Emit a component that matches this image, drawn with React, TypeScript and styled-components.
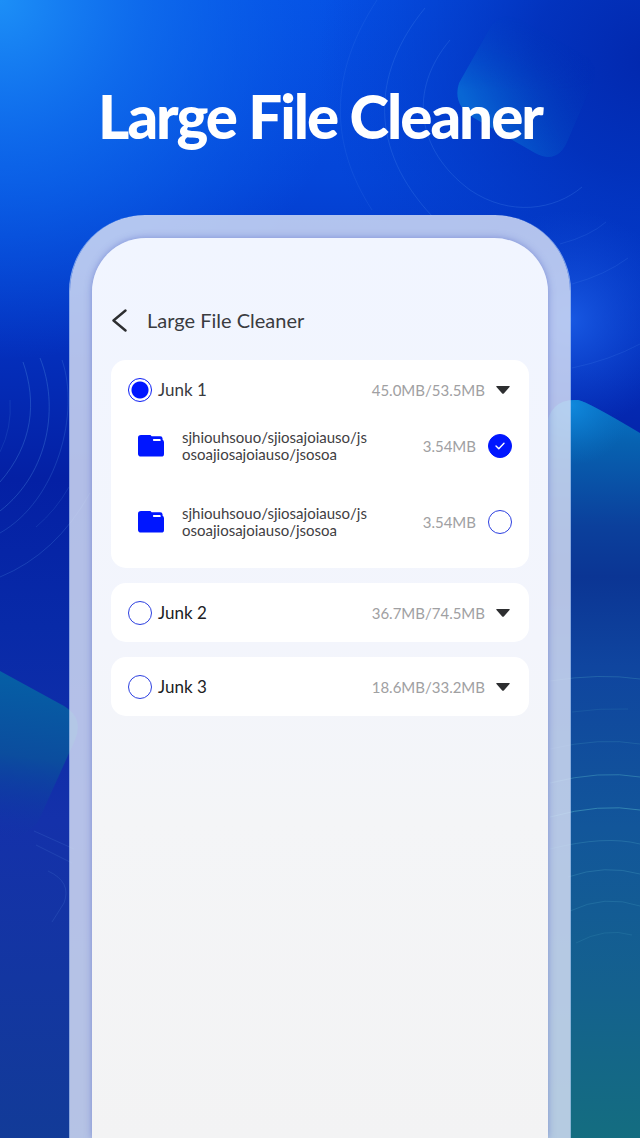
import React, { useState } from "react";
import styled, { createGlobalStyle } from "styled-components";

const GlobalStyle = createGlobalStyle`
  *, *::before, *::after { box-sizing: border-box; }
  body { margin: 0; background: #0428b4; font-family: Lato, "Liberation Sans", sans-serif; }
`;

const Page = styled.div`
  position: relative;
  display: flex;
  flex-direction: column;
  min-height: 100vh;
  overflow: hidden;
`;

const Backdrop = styled.svg`
  position: absolute;
  inset: 0;
  width: 100%;
  height: 100%;
`;

const Headline = styled.h1`
  position: relative;
  margin: 0;
  padding: 80px 24px 63px;
  color: #fff;
  font-size: 60px;
  font-weight: 900;
  line-height: 72px;
  letter-spacing: -2px;
  text-align: center;
`;

const Phone = styled.div`
  position: relative;
  flex: 1;
  display: flex;
  margin: 0 69px;
  padding: 23px 22px 0;
  border: 1px solid rgba(190, 212, 248, 0.7);
  border-width: 0 1px;
  border-radius: 76px 76px 0 0;
  background: rgba(214, 222, 244, 0.83);
  background-clip: padding-box;
`;

const Screen = styled.main`
  flex: 1;
  min-width: 0;
  padding: 60px 19px 40px;
  border-radius: 54px 54px 0 0;
  background: linear-gradient(#f1f5ff, #f3f5fc 45%, #f4f5f7 65%, #f3f3f4);
  box-shadow: 0 0 7px rgba(72, 88, 190, 0.5);
`;

const AppBar = styled.header`
  display: flex;
  align-items: center;
  gap: 19px;
  height: 44px;
`;

const IconButton = styled.button<{ $width: number }>`
  display: flex;
  align-items: center;
  justify-content: center;
  width: ${(p) => p.$width}px;
  height: 24px;
  padding: 0;
  border: 0;
  background: none;
  color: #2d2e30;
  cursor: pointer;
`;

const BarTitle = styled.h2`
  margin: 0;
  color: #3a3b3f;
  font-size: 20px;
  font-weight: 400;
  line-height: 24px;
`;

const Groups = styled.div`
  display: flex;
  flex-direction: column;
  gap: 15px;
  margin-top: 18px;
`;

const Card = styled.section`
  border-radius: 15px;
  background: #fff;
`;

const CardHeader = styled.div`
  display: flex;
  align-items: center;
  gap: 9px;
  height: 59px;
  padding: 0 17px;
`;

const GroupLabel = styled.label<{ $muted: boolean }>`
  display: flex;
  flex: 1;
  align-items: center;
  gap: 6px;
  color: ${(p) => (p.$muted ? "#3a3b3f" : "#202124")};
  font-size: 17px;
  line-height: 24px;
  cursor: pointer;
`;

const Radio = styled.input`
  appearance: none;
  width: 24px;
  height: 24px;
  margin: 0;
  border: 1px solid #2c3fe0;
  border-radius: 50%;
  background: #fff;
  cursor: pointer;

  &:checked {
    border-color: #0a1cf5;
    background: radial-gradient(circle, #0016ff 8px, #fff 9px);
  }
`;

const Size = styled.span`
  color: #a0a0a2;
  font-size: 15px;
  line-height: 18px;
  white-space: nowrap;
`;

const FileList = styled.ul`
  display: flex;
  flex-direction: column;
  gap: 22px;
  margin: 0;
  padding: 0 17px 19px 27px;
  list-style: none;
`;

const FileRow = styled.li`
  display: flex;
  align-items: center;
  gap: 12px;
  height: 54px;
`;

const FileLabel = styled.label`
  display: flex;
  flex: 1;
  align-items: center;
  gap: 18px;
  cursor: pointer;
`;

const FilePath = styled.span`
  width: 188px;
  color: #3f4043;
  font-size: 15px;
  line-height: 17px;
  word-break: break-all;
`;

const CheckWrap = styled.span`
  display: grid;
  width: 24px;
  height: 24px;

  & > * { grid-area: 1 / 1; }
  & > svg { place-self: center; pointer-events: none; }
`;

const Checkbox = styled.input`
  appearance: none;
  width: 24px;
  height: 24px;
  margin: 0;
  border: 1px solid #2c3fe0;
  border-radius: 50%;
  background: #fff;
  cursor: pointer;

  &:checked { border-color: #0016ff; background: #0016ff; }
`;

const FolderIcon = () => (
  <svg width="26" height="22" viewBox="0 0 26 22" aria-hidden="true">
    <path
      fill="#0016ff"
      d="M3 0H11.5C12.6 0 13 .4 13.6 1.2H22.2A2.4 2.4 0 0 1 24.6 3.5V4.8Q26 5.4 26 7.2V19Q26 21.6 23.4 21.6H3Q0 21.6 0 18.8V2.8Q0 0 3 0ZM15.8 3.9A1 1 0 0 0 16 5.9H22.6V4.4Q22.6 3.9 22 3.9Z"
    />
  </svg>
);

const Scene = () => (
  <Backdrop viewBox="0 0 640 1138" preserveAspectRatio="xMidYMid slice" aria-hidden="true">
    <defs>
      <linearGradient id="base" x1="0" y1="0" x2="0" y2="1">
        <stop offset="0" stopColor="#0550e4" />
        <stop offset="0.16" stopColor="#0445d8" />
        <stop offset="0.3" stopColor="#0430bd" />
        <stop offset="0.42" stopColor="#0420a4" />
        <stop offset="0.55" stopColor="#082aa8" />
        <stop offset="0.72" stopColor="#1431aa" />
        <stop offset="1" stopColor="#123b98" />
      </linearGradient>
      <radialGradient id="sky" gradientUnits="userSpaceOnUse" cx="0" cy="0" r="360">
        <stop offset="0" stopColor="#1c8ff7" />
        <stop offset="0.4" stopColor="#1070ee" stopOpacity="0.8" />
        <stop offset="1" stopColor="#0860ec" stopOpacity="0" />
      </radialGradient>
      <radialGradient id="navy" gradientUnits="userSpaceOnUse" cx="650" cy="60" r="330">
        <stop offset="0" stopColor="#0228ae" />
        <stop offset="0.35" stopColor="#022eb7" stopOpacity="0.85" />
        <stop offset="1" stopColor="#0338c6" stopOpacity="0" />
      </radialGradient>
      <radialGradient id="glow" gradientUnits="userSpaceOnUse" cx="570" cy="320" r="110">
        <stop offset="0" stopColor="#1858e2" />
        <stop offset="1" stopColor="#0d48d2" stopOpacity="0" />
      </radialGradient>
      <linearGradient id="gem" gradientUnits="userSpaceOnUse" x1="480" y1="130" x2="600" y2="70">
        <stop offset="0" stopColor="#0866d4" />
        <stop offset="1" stopColor="#0230b4" stopOpacity="0" />
      </linearGradient>
      <linearGradient id="gemFade" gradientUnits="userSpaceOnUse" x1="0" y1="10" x2="0" y2="90">
        <stop offset="0" stopColor="#000" />
        <stop offset="1" stopColor="#fff" />
      </linearGradient>
      <mask id="gemMask" maskUnits="userSpaceOnUse" x="440" y="0" width="200" height="180">
        <rect x="440" width="200" height="180" fill="url(#gemFade)" />
      </mask>
      <linearGradient id="leftGem" gradientUnits="userSpaceOnUse" x1="30" y1="672" x2="10" y2="840">
        <stop offset="0" stopColor="#0560a6" />
        <stop offset="0.5" stopColor="#0b4d9e" />
        <stop offset="1" stopColor="#1034a4" stopOpacity="0" />
      </linearGradient>
      <linearGradient id="rightPanel" gradientUnits="userSpaceOnUse" x1="0" y1="400" x2="0" y2="1138">
        <stop offset="0" stopColor="#0875c8" />
        <stop offset="0.06" stopColor="#0761b0" />
        <stop offset="0.17" stopColor="#0b409c" />
        <stop offset="0.24" stopColor="#0b3594" />
        <stop offset="0.36" stopColor="#0f459f" />
        <stop offset="0.58" stopColor="#12569a" />
        <stop offset="0.8" stopColor="#14618e" />
        <stop offset="1" stopColor="#146d80" />
      </linearGradient>
      <radialGradient id="panelGlow" gradientUnits="userSpaceOnUse" cx="572" cy="405" r="60">
        <stop offset="0" stopColor="#1088dc" />
        <stop offset="1" stopColor="#0a70c4" stopOpacity="0" />
      </radialGradient>
    </defs>
    <rect width="640" height="1138" fill="url(#base)" />
    <rect width="640" height="400" fill="url(#sky)" />
    <rect x="300" width="340" height="420" fill="url(#navy)" />
    <rect x="440" y="190" width="200" height="250" fill="url(#glow)" />
    <path
      d="M459 83L490 28Q500 10 520 20L585 56Q600 66 592 84L568 140Q558 165 535 153L474 118Q452 105 459 83Z"
      fill="url(#gem)"
      mask="url(#gemMask)"
    />
    <g fill="none" stroke="#4f8df0" strokeOpacity="0.24">
      <path d="M450 40C408 90 416 150 470 190C510 217 555 210 582 187" />
      <path d="M425 8C370 75 370 150 432 216" />
      <path d="M377 0C328 75 330 145 372 210" strokeOpacity="0.15" />
      <path d="M560 244Q590 236 606 222M572 284Q605 275 628 258M572 368Q610 360 640 344" strokeOpacity="0.18" />
    </g>
    <g fill="none" stroke="#4f8ddf" strokeOpacity="0.34">
      <path d="M10 400Q12 428 0 452" strokeOpacity="0.18" />
      <path d="M23 362C37 402 33 444 0 482" />
      <path d="M40 358C59 405 50 472 0 511" />
      <path d="M62 360C80 412 58 500 0 533" strokeOpacity="0.26" />
      <path d="M69 487Q56 510 36 527" strokeOpacity="0.18" />
      <path d="M90 493Q56 554 0 577" strokeOpacity="0.26" />
    </g>
    <path d="M0 671L64 706Q84 718 75 740L38 822Q20 842 0 842Z" fill="url(#leftGem)" />
    <g fill="none" stroke="#4f7fd8" strokeOpacity="0.22">
      <path d="M34 831L74 849M36 845L72 863M48 871Q72 882 64 903L52 922" />
    </g>
    <path
      d="M546 1138V428Q550 398 578 400Q588 402 640 433V1138Z"
      fill="url(#rightPanel)"
    />
    <path d="M546 500V428Q550 398 578 400Q588 402 640 433V500Z" fill="url(#panelGlow)" />
    <g fill="none" stroke="#46a0c0" strokeOpacity="0.32">
      <path d="M550 681Q600 673 640 679" />
      <path d="M572 712Q600 708 628 709" strokeOpacity="0.16" />
      <path d="M550 749Q600 737 640 744" strokeOpacity="0.24" />
      <path d="M550 783Q600 770 640 777" strokeOpacity="0.5" />
      <path d="M550 817Q600 803 640 810" strokeOpacity="0.62" />
      <path d="M550 849Q605 835 640 844" />
      <path d="M568 877Q605 864 640 874" />
      <path d="M570 911Q605 894 640 906" strokeOpacity="0.26" />
      <path d="M576 943Q605 927 632 935" strokeOpacity="0.2" />
    </g>
  </Backdrop>
);

const PATH = "sjhiouhsouo/sjiosajoiauso/jsosoajiosajoiauso/jsosoa";

const GROUPS = [
  {
    name: "Junk 1",
    size: "45.0MB/53.5MB",
    files: [
      { id: "file-1", path: PATH, size: "3.54MB", checked: true },
      { id: "file-2", path: PATH, size: "3.54MB", checked: false },
    ],
  },
  { name: "Junk 2", size: "36.7MB/74.5MB", files: [] },
  { name: "Junk 3", size: "18.6MB/33.2MB", files: [] },
];

export default function App() {
  const [selected, setSelected] = useState("Junk 1");

  return (
    <>
      <GlobalStyle />
      <Page>
        <Scene />
        <Headline>Large File Cleaner</Headline>
        <Phone>
          <Screen>
            <AppBar>
              <IconButton $width={17} type="button" aria-label="Back">
                <svg width="17" height="24" viewBox="0 0 17 24" fill="none" aria-hidden="true">
                  <path d="M14.5 2.5L2.5 12.5L14.5 22.5" stroke="currentColor" strokeWidth="2.4" strokeLinecap="round" strokeLinejoin="round" />
                </svg>
              </IconButton>
              <BarTitle>Large File Cleaner</BarTitle>
            </AppBar>
            <Groups>
              {GROUPS.map((group) => (
                <Card key={group.name}>
                  <CardHeader>
                    <GroupLabel $muted={group.files.length > 0}>
                      <Radio
                        type="radio"
                        name="group"
                        checked={selected === group.name}
                        onChange={() => setSelected(group.name)}
                      />
                      {group.name}
                    </GroupLabel>
                    <Size>{group.size}</Size>
                    <IconButton $width={18} type="button" aria-label={`Toggle ${group.name}`}>
                      <svg width="14" height="8" viewBox="0 0 14 8" aria-hidden="true">
                        <path d="M.8 0H13.2Q14.2 .3 13.5 1.1L7.8 7.4Q7 8.2 6.2 7.4L.5 1.1Q-.2 .3 .8 0Z" fill="currentColor" />
                      </svg>
                    </IconButton>
                  </CardHeader>
                  {group.files.length > 0 && (
                    <FileList>
                      {group.files.map((file) => (
                        <FileRow key={file.id}>
                          <FileLabel htmlFor={file.id}>
                            <FolderIcon />
                            <FilePath>{file.path}</FilePath>
                          </FileLabel>
                          <Size>{file.size}</Size>
                          <CheckWrap>
                            <Checkbox id={file.id} type="checkbox" defaultChecked={file.checked} />
                            <svg width="10" height="8" viewBox="0 0 10 8" fill="none" aria-hidden="true">
                              <path d="M1 4L3.8 6.8L9 1.2" stroke="#fff" strokeWidth="1.4" strokeLinecap="round" strokeLinejoin="round" />
                            </svg>
                          </CheckWrap>
                        </FileRow>
                      ))}
                    </FileList>
                  )}
                </Card>
              ))}
            </Groups>
          </Screen>
        </Phone>
      </Page>
    </>
  );
}
